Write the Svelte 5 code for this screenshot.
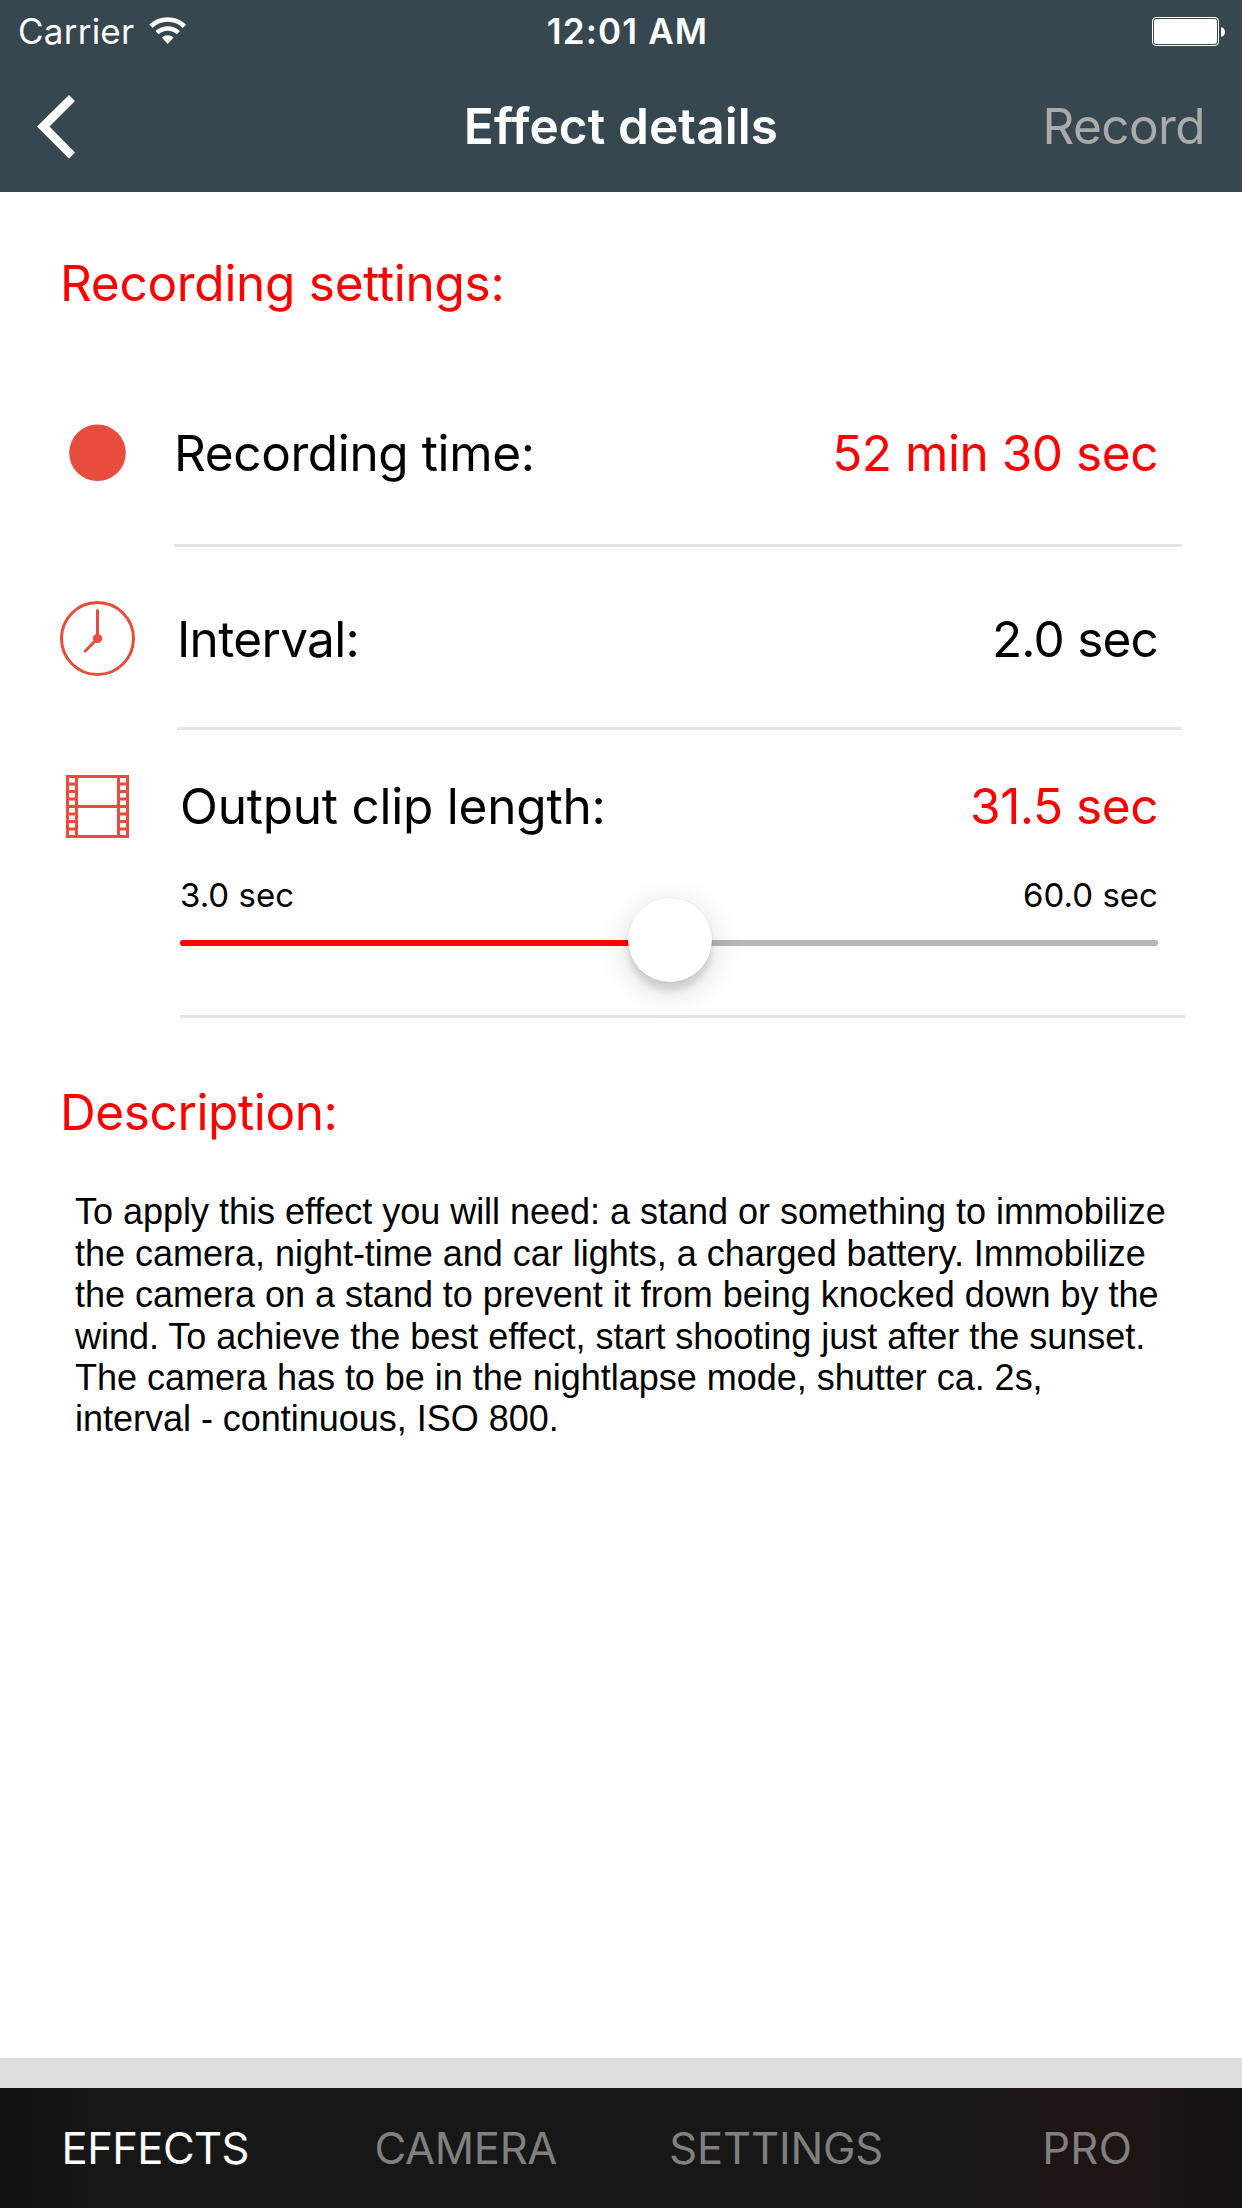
<script>
  const minSeconds = 3;
  const maxSeconds = 60;
  let clipLength = $state(31.5);
  let activeTab = $state('EFFECTS');

  const position = $derived(((clipLength - minSeconds) / (maxSeconds - minSeconds)) * 100);

  const description = [
    'To apply this effect you will need: a stand or something to immobilize',
    'the camera, night-time and car lights, a charged battery. Immobilize',
    'the camera on a stand to prevent it from being knocked down by the',
    'wind. To achieve the best effect, start shooting just after the sunset.',
    'The camera has to be in the nightlapse mode, shutter ca. 2s,',
    'interval - continuous, ISO 800.'
  ].join('\n');

  const tabs = [
    { name: 'EFFECTS', spacing: 'tight' },
    { name: 'CAMERA', spacing: 'snug' },
    { name: 'SETTINGS', spacing: 'normal' },
    { name: 'PRO', spacing: 'loose' }
  ];

  // Perforations on the two edges of the film strip
  const rungs = [9, 16.5, 24, 31.5, 39, 46.5, 54];
</script>

<div class="screen">
  <header>
    <div class="status">
      <div class="carrier">
        <span>Carrier</span>
        <svg class="wifi" viewBox="0 0 38 28" width="38" height="28">
          <path d="M1.9 9.2 A24.6 24.6 0 0 1 35.5 9.2" />
          <path d="M8 15.6 A15.8 15.8 0 0 1 29.4 15.6" />
          <path class="solid" d="M12.9 20.6 A8.3 8.3 0 0 1 24.5 20.6 L18.7 27 Z" />
        </svg>
      </div>
      <span class="clock">12:01 AM</span>
      <svg class="battery" viewBox="0 0 73 29" width="73" height="29">
        <rect class="case" x="0.5" y="0.5" width="66" height="28" rx="3.5" />
        <rect x="2" y="2" width="63" height="25" rx="2.2" />
        <path d="M69 10 C74.3 11 74.3 19 69 20 Z" />
      </svg>
    </div>
    <nav>
      <button class="back" aria-label="Back">
        <svg viewBox="0 0 38 64" width="38" height="64">
          <polygon points="32,0 38,6 12.5,31.5 38,57.5 32,63.5 0,31.5" />
        </svg>
      </button>
      <h1>Effect details</h1>
      <button class="record">Record</button>
    </nav>
  </header>

  <main>
    <h2 class="settings-title">Recording settings:</h2>

    <div class="row time">
      <svg class="icon" viewBox="0 0 75 75" width="75" height="75">
        <circle class="dot" cx="37.5" cy="36.8" r="28.3" />
      </svg>
      <div class="body">
        <span class="label">Recording time:</span>
        <span class="value red">52 min 30 sec</span>
      </div>
    </div>

    <div class="row interval">
      <svg class="icon" viewBox="0 0 75 75" width="75" height="75">
        <circle class="line" cx="37.5" cy="37.5" r="36" />
        <path class="line round" d="M37.5 9.5 V37.5 L25.3 50" />
        <circle class="dot" cx="37.5" cy="37.5" r="4.6" />
      </svg>
      <div class="body">
        <span class="label">Interval:</span>
        <span class="value">2.0 sec</span>
      </div>
    </div>

    <div class="row clip">
      <svg class="icon film" viewBox="0 0 63 63" width="63" height="63">
        <rect class="line" x="1.5" y="1.5" width="60" height="60" />
        <path class="line" d="M10.5 1.5 V61.5 M52.5 1.5 V61.5 M10.5 31.5 H52.5" />
        {#each rungs as y}
          <path class="line" d="M1.5 {y} H10.5 M52.5 {y} H61.5" />
        {/each}
      </svg>
      <div class="body">
        <div class="head">
          <span class="label">Output clip length:</span>
          <span class="value red">{clipLength.toFixed(1)} sec</span>
        </div>
        <div class="limits">
          <span>{minSeconds.toFixed(1)} sec</span>
          <span>{maxSeconds.toFixed(1)} sec</span>
        </div>
        <div class="track">
          <div class="filled" style="width: {position}%"></div>
          <div class="thumb" style="left: {position}%"></div>
        </div>
      </div>
    </div>

    <h2 class="description-title">Description:</h2>
    <p>{description}</p>
  </main>

  <div class="band"></div>
  <footer>
    {#each tabs as tab}
      <button class="tab {tab.spacing}" class:active={tab.name === activeTab} onclick={() => (activeTab = tab.name)}>{tab.name}</button>
    {/each}
  </footer>
</div>

<style>
  :global(body) {
    margin: 0;
    background: #fff;
  }
  .screen {
    display: flex;
    flex-direction: column;
    width: 1242px;
    height: 2208px;
    overflow: hidden;
    background: #fff;
    color: #000;
    font-family: Inter, Roboto, sans-serif;
    font-size: 49.5px;
    line-height: 60px;
    white-space: nowrap;
  }
  button {
    padding: 0;
    border: 0;
    background: none;
    font: inherit;
    color: inherit;
  }
  svg {
    display: block;
    flex: none;
  }

  header {
    display: flex;
    flex-direction: column;
    height: 192px;
    background: #37474f;
    color: #fff;
    fill: #fff;
  }
  .status {
    display: grid;
    grid-template-columns: 1fr auto 1fr;
    align-items: center;
    height: 61px;
    margin-bottom: -1px;
    padding: 0 17px 0 18px;
    font-size: 35px;
    line-height: 62px;
  }
  .carrier {
    display: flex;
    align-items: center;
    gap: 15px;
    letter-spacing: 0.24px;
  }
  .wifi {
    margin-top: -1px;
  }
  .wifi path {
    fill: none;
    stroke: #fff;
    stroke-width: 4.6;
  }
  .wifi path.solid {
    fill: #fff;
    stroke: none;
  }
  .clock {
    margin-left: 12px;
    font-weight: 600;
    letter-spacing: 1.15px;
  }
  .battery {
    justify-self: end;
  }
  .battery .case {
    fill: none;
    stroke: #fff;
  }
  nav {
    display: grid;
    grid-template-columns: 1fr auto 1fr;
    align-items: center;
    height: 132px;
    padding: 0 37px;
  }
  .back {
    justify-self: start;
    margin-top: 2px;
  }
  h1 {
    margin: 0;
    font-size: 49.5px;
    font-weight: 600;
    letter-spacing: 0.12px;
  }
  .record {
    justify-self: end;
    color: #aaa;
    letter-spacing: -0.6px;
  }

  main {
    flex: 1;
    padding: 61px 57px 0 60px;
  }
  h2 {
    margin: 0;
    font-size: 49.5px;
    font-weight: 400;
    color: #f00;
  }
  .settings-title {
    margin-bottom: 49px;
    letter-spacing: -0.28px;
  }
  .description-title {
    margin-top: 64px;
    letter-spacing: -0.38px;
  }
  .row {
    display: flex;
    align-items: center;
  }
  .icon {
    fill: #e74c3c;
  }
  .line {
    fill: none;
    stroke: #e74c3c;
    stroke-width: 3;
  }
  .round {
    stroke-linecap: round;
  }
  .body {
    flex: 1;
    box-sizing: border-box;
    border-bottom: 3px solid #e5e5e5;
  }
  .time .body,
  .interval .body {
    display: flex;
    align-items: center;
    justify-content: space-between;
    margin-right: 3px;
    padding-right: 24px;
  }
  .time .body {
    height: 185px;
    margin-left: 39px;
  }
  .time .icon {
    margin-bottom: 3px;
  }
  .interval .body {
    height: 183px;
    margin-left: 42px;
    padding-top: 4px;
  }
  .red {
    color: #f00;
  }
  .time .label {
    letter-spacing: -0.38px;
  }
  .time .value {
    letter-spacing: -0.45px;
  }
  .interval .label {
    letter-spacing: -0.67px;
  }
  .interval .value {
    letter-spacing: -0.8px;
  }
  .clip .label {
    letter-spacing: -0.22px;
  }
  .clip .value {
    letter-spacing: -0.45px;
  }
  .clip {
    align-items: flex-start;
  }
  .film {
    margin: 45px 6px 0;
  }
  .clip .body {
    height: 288px;
    margin-left: 45px;
    padding: 46px 27px 0 0;
  }
  .head,
  .limits {
    display: flex;
    justify-content: space-between;
  }
  .limits {
    margin: 39px 0 25px;
    font-size: 33px;
    line-height: 40px;
    letter-spacing: 0.03px;
  }
  .track {
    position: relative;
    height: 6px;
    border-radius: 3px;
    background: #b6b6b6;
  }
  .filled {
    height: 6px;
    border-radius: 3px;
    background: #f00;
  }
  .thumb {
    position: absolute;
    top: -42px;
    width: 84px;
    height: 84px;
    margin-left: -41px;
    border-radius: 50%;
    background: #fff;
    box-shadow:
      0 0 0 1px rgba(0, 0, 0, 0.03),
      0 9px 6px rgba(0, 0, 0, 0.11),
      0 8px 34px rgba(0, 0, 0, 0.16);
  }
  p {
    margin: 49.4px 0 0 15px;
    font-family: 'Liberation Sans', Arial, sans-serif;
    font-size: 36px;
    line-height: 41.4px;
    letter-spacing: -0.016px;
    white-space: pre;
  }

  .band {
    height: 30px;
    background: #ddd;
  }
  footer {
    display: grid;
    grid-template-columns: repeat(4, 1fr);
    height: 120px;
    background:
      linear-gradient(90deg, transparent 77%, rgba(50, 14, 14, 0.3) 86%, rgba(50, 14, 14, 0.25) 92%, rgba(16, 14, 13, 0.4) 100%),
      linear-gradient(90deg, #121212 0, #171717 8%, #171717 100%);
    color: #808080;
    font-size: 43.5px;
  }
  .tab.active {
    color: #fff;
  }
  .tight {
    letter-spacing: -0.58px;
  }
  .snug {
    letter-spacing: -0.3px;
  }
  .normal {
    letter-spacing: -0.16px;
  }
  .loose {
    padding-left: 1px;
    letter-spacing: 0.3px;
  }
</style>
